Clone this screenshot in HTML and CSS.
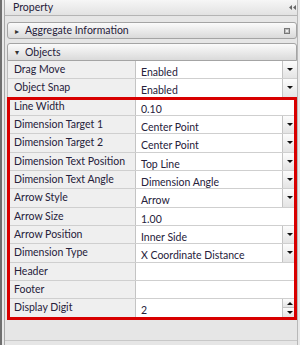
FILE: index.html
```html
<!DOCTYPE html>
<html lang="en">
<head>
    <meta charset="UTF-8">
    <title>Property</title>
    <link rel="stylesheet" href="styles.css">
</head>
<body>
    <div class="window">
        <div class="pane">
            <div class="titlebar">
                <span>Property</span>
                <svg class="collapse" width="7" height="5" viewBox="0 0 7 5"><path d="M0 2.5 L3 0 L3 5 Z M4 2.5 L7 0 L7 5 Z" fill="#666"/></svg>
            </div>

            <div class="section closed">
                <span class="tri">&#9656;</span>
                <span class="section-label">Aggregate Information</span>
                <svg class="pin" width="6" height="6" viewBox="0 0 6 6"><rect x="0.5" y="0.5" width="5" height="5" fill="#bbb" stroke="#777"/><rect x="2" y="2" width="2" height="2" fill="#eee"/></svg>
            </div>

            <div class="section open">
                <span class="tri">&#9662;</span>
                <span class="section-label">Objects</span>
            </div>

            <div class="grid">
                <div class="row"><div class="name">Drag Move</div><div class="value">Enabled</div><div class="drop"></div></div>
                <div class="row"><div class="name">Object Snap</div><div class="value">Enabled</div><div class="drop"></div></div>
                <div class="row"><div class="name">Line Width</div><div class="value wide">0.10</div></div>
                <div class="row"><div class="name">Dimension Target 1</div><div class="value">Center Point</div><div class="drop"></div></div>
                <div class="row"><div class="name">Dimension Target 2</div><div class="value">Center Point</div><div class="drop"></div></div>
                <div class="row"><div class="name">Dimension Text Position</div><div class="value">Top Line</div><div class="drop"></div></div>
                <div class="row"><div class="name">Dimension Text Angle</div><div class="value">Dimension Angle</div><div class="drop"></div></div>
                <div class="row"><div class="name">Arrow Style</div><div class="value">Arrow</div><div class="drop"></div></div>
                <div class="row"><div class="name">Arrow Size</div><div class="value wide">1.00</div></div>
                <div class="row"><div class="name">Arrow Position</div><div class="value">Inner Side</div><div class="drop"></div></div>
                <div class="row"><div class="name">Dimension Type</div><div class="value">X Coordinate Distance</div><div class="drop"></div></div>
                <div class="row"><div class="name">Header</div><div class="value wide"></div></div>
                <div class="row"><div class="name">Footer</div><div class="value wide"></div></div>
                <div class="row"><div class="name">Display Digit</div><div class="value">2</div><div class="spin"><div class="spin-btn up"></div><div class="spin-btn down"></div></div></div>

                <div class="highlight"></div>
            </div>

            <div class="footer-space"></div>
        </div>
    </div>
</body>
</html>
```

FILE: styles.css
```css
body {
    margin: 0;
    font-family: 'Lato', 'Liberation Sans', sans-serif;
    font-size: 10.5px;
    color: #26213a;
}

.window {
    width: 300px;
    height: 345px;
    box-sizing: border-box;
    border-left: 2px solid #6f6f6f;
    padding: 0 2px 0 2px;
    background: #e9e9e9;
    display: flex;
}

.pane {
    flex: 1;
    display: flex;
    flex-direction: column;
    border-left: 1px solid #a8a8a8;
    border-right: 1px solid #b8b8b8;
    background: #e6e6e6;
}

.titlebar {
    height: 15px;
    border-bottom: 1px solid #b4b4b4;
    background: linear-gradient(#f6f6f6, #e2e2e2);
    display: flex;
    align-items: center;
    justify-content: space-between;
    padding: 0 1px 0 8px;
}

.titlebar span {
    margin-top: -2px;
}

.section {
    margin-left: 2px;
    height: 15px;
    border: 1px solid #a4a4a4;
    border-radius: 3px;
    background: linear-gradient(#fbfbfb, #dadada);
    display: flex;
    align-items: center;
    padding: 0 6px 0 7px;
}

.section.closed {
    margin-top: 6px;
}

.section.open {
    margin-top: 4px;
    height: 16px;
    border-radius: 3px 3px 0 0;
}

.tri {
    font-size: 8px;
    width: 10px;
    color: #333;
}

.section-label {
    flex: 1;
    margin-top: -1px;
}

.grid {
    position: relative;
    margin-left: 2px;
    border-left: 1px solid #bdbdbd;
    background: #fff;
}

.row {
    display: flex;
    height: 18.33px;
    box-sizing: border-box;
    border-bottom: 1px solid #cfcfcf;
}

.name {
    width: 128px;
    flex: none;
    background: #efefef;
    border-right: 1px solid #c4c4c4;
    padding: 2px 0 0 6px;
    box-sizing: border-box;
    line-height: 12px;
}

.value {
    flex: 1;
    background: #fff;
    padding: 5px 0 0 5px;
    line-height: 12px;
}

.drop {
    width: 14px;
    flex: none;
    border-left: 1px solid #c4c4c4;
    background: linear-gradient(#fcfcfc, #e4e4e4);
    position: relative;
}

.drop::after {
    content: "";
    position: absolute;
    left: 4px;
    top: 7px;
    border-left: 3px solid transparent;
    border-right: 3px solid transparent;
    border-top: 3px solid #111;
}

.spin {
    width: 14px;
    flex: none;
    border-left: 1px solid #c4c4c4;
    display: flex;
    flex-direction: column;
}

.spin-btn {
    flex: 1;
    background: linear-gradient(#fcfcfc, #e4e4e4);
    position: relative;
}

.spin-btn.up {
    border-bottom: 1px solid #c4c4c4;
}

.spin-btn::after {
    content: "";
    position: absolute;
    left: 4px;
    top: 3px;
    border-left: 3px solid transparent;
    border-right: 3px solid transparent;
}

.spin-btn.up::after {
    border-bottom: 3px solid #111;
}

.spin-btn.down::after {
    border-top: 3px solid #111;
}

.highlight {
    position: absolute;
    left: -1px;
    top: 36px;
    width: 284px;
    height: 217px;
    border: 3px solid #d80000;
    pointer-events: none;
}

.footer-space {
    flex: 1;
    border-bottom: 1px solid #c8c8c8;
    margin-bottom: 4px;
}
```
